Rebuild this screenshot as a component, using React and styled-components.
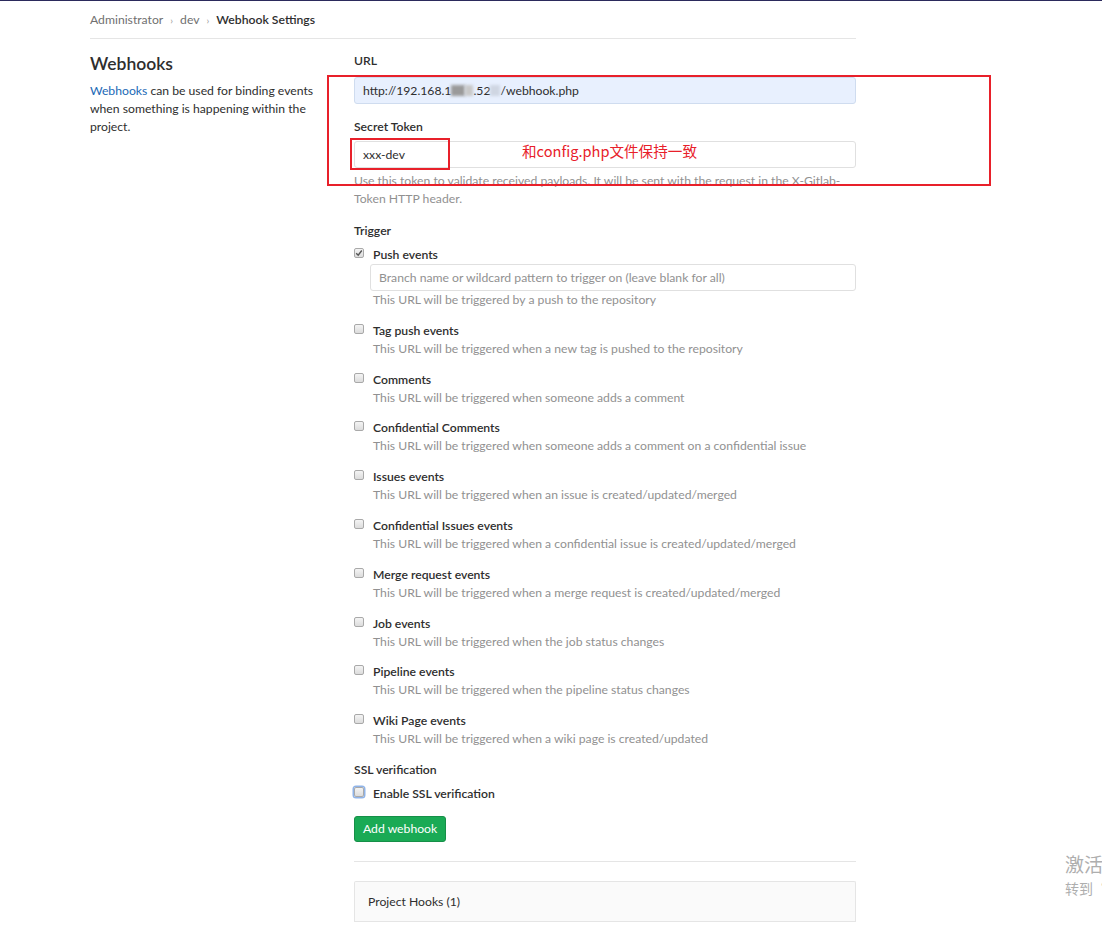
import styled, { createGlobalStyle } from 'styled-components';

const GlobalStyle = createGlobalStyle`
  html, body {
    margin: 0;
    padding: 0;
    background: #fff;
    overflow: hidden;
  }
  body {
    font-family: Lato, "Noto Sans", "Liberation Sans", sans-serif;
    font-size: 12.2px;
    color: #2e2e2e;
  }
`;

const Page = styled.div`
  position: relative;
  min-height: 925px;
  border-top: 1px solid #2b2a5c;
  box-sizing: border-box;
`;

const Container = styled.div`
  width: 766px;
  margin-left: 90px;
`;

const Breadcrumbs = styled.div`
  display: flex;
  align-items: center;
  height: 37px;
  border-bottom: 1px solid #e5e5e5;
  color: #707070;
  line-height: 18px;
`;

const Crumb = styled.span`
  color: ${(p) => (p.current ? '#2e2e2e' : '#707070')};
  font-weight: ${(p) => (p.current ? 600 : 400)};
`;

const Chevron = styled.span`
  color: #9a9a9a;
  font-size: 10px;
  margin: 0 7px;
`;

const Row = styled.div`
  display: flex;
  padding-top: 13px;
`;

const Sidebar = styled.div`
  width: 232px;
  margin-right: 32px;
`;

const Heading = styled.h4`
  margin: 0 0 6px;
  font-size: 17.5px;
  font-weight: 600;
  line-height: 24px;
`;

const Intro = styled.p`
  margin: 0;
  line-height: 18px;
  a {
    color: #1b69b6;
    text-decoration: none;
  }
`;

const Form = styled.div`
  width: 502px;
`;

const Group = styled.div`
  margin-bottom: ${(p) => p.mb || 14}px;
`;

const Label = styled.div`
  line-height: 18px;
  font-weight: 600;
  margin-bottom: ${(p) => p.mb || 6}px;
`;

const Input = styled.div`
  box-sizing: border-box;
  height: 27px;
  margin-left: ${(p) => p.shift || 0}px;
  padding: 0 8px;
  display: flex;
  align-items: center;
  border: 1px solid ${(p) => (p.autofill ? '#cfdcef' : '#e0e0e0')};
  background: ${(p) => (p.autofill ? '#e8f0fe' : '#fff')};
  border-radius: 3px;
  color: ${(p) => (p.placeholder ? '#919191' : '#2e2e2e')};
  white-space: nowrap;
`;

const Blur = styled.span`
  display: inline-block;
  width: ${(p) => p.w}px;
  height: 11px;
  background: ${(p) => p.c};
  filter: blur(1.5px);
  vertical-align: middle;
`;

const Help = styled.div`
  color: #919191;
  line-height: 18px;
  margin-top: ${(p) => p.mt || 0}px;
`;

const Option = styled.div`
  margin-bottom: 12.8px;
`;

const CheckRow = styled.label`
  display: flex;
  align-items: center;
  line-height: 18px;
  font-weight: 600;
`;

const Box = styled.span`
  box-sizing: border-box;
  width: 10px;
  height: 10px;
  margin-right: 9px;
  margin-top: -4px;
  border: 1px solid #a9a9a9;
  border-radius: 2px;
  background: linear-gradient(#f4f4f4, #dcdcdc);
  box-shadow: ${(p) => (p.focus ? '0 0 0 1.5px #8fb3e8' : 'none')};
  display: flex;
  align-items: center;
  justify-content: center;
`;

const OptionBody = styled.div`
  padding-left: 19px;
`;

const Button = styled.button`
  height: 26px;
  padding: 0 8px;
  font-family: inherit;
  font-size: 12.2px;
  color: #fff;
  background: #1aaa55;
  border: 1px solid #168f48;
  border-radius: 3px;
  margin-top: 13px;
`;

const Divider = styled.hr`
  border: 0;
  border-top: 1px solid #e5e5e5;
  margin: 19px 0 19px;
`;

const Panel = styled.div`
  border: 1px solid #e5e5e5;
  border-bottom: 0;
  border-radius: 2px 2px 0 0;
  background: #fafafa;
`;

const PanelHeader = styled.div`
  height: 39px;
  padding: 0 13px;
  display: flex;
  align-items: center;
  border-bottom: 1px solid #e5e5e5;
`;

const Annotation = styled.div`
  position: absolute;
  border: 2px solid #e8202a;
  box-sizing: border-box;
`;

const Note = styled.div`
  position: absolute;
  left: 522px;
  top: 140px;
  color: #e8202a;
  font-family: "Noto Sans CJK SC", "Noto Sans", sans-serif;
  font-size: 14.6px;
  line-height: 20px;
  text-shadow: 0 0 2px #fff, 0 0 2px #fff;
`;

const Watermark = styled.div`
  position: absolute;
  left: 1065px;
  top: 850px;
  color: #aeaeae;
  font-family: "Noto Sans CJK SC", sans-serif;
  white-space: nowrap;
  div:first-child {
    font-size: 19px;
    line-height: 26px;
  }
  div:last-child {
    font-size: 14px;
    line-height: 22px;
  }
`;

const events = [
  ['Tag push events', 'This URL will be triggered when a new tag is pushed to the repository'],
  ['Comments', 'This URL will be triggered when someone adds a comment'],
  ['Confidential Comments', 'This URL will be triggered when someone adds a comment on a confidential issue'],
  ['Issues events', 'This URL will be triggered when an issue is created/updated/merged'],
  ['Confidential Issues events', 'This URL will be triggered when a confidential issue is created/updated/merged'],
  ['Merge request events', 'This URL will be triggered when a merge request is created/updated/merged'],
  ['Job events', 'This URL will be triggered when the job status changes'],
  ['Pipeline events', 'This URL will be triggered when the pipeline status changes'],
  ['Wiki Page events', 'This URL will be triggered when a wiki page is created/updated'],
];

const Check = () => (
  <svg width="8" height="8" viewBox="0 0 8 8">
    <path d="M1.2 4.2 L3.2 6.2 L6.8 1.5" fill="none" stroke="#555" strokeWidth="1.4" />
  </svg>
);

export default function App() {
  return (
    <Page>
      <GlobalStyle />
      <Container>
        <Breadcrumbs>
          <Crumb>Administrator</Crumb>
          <Chevron>›</Chevron>
          <Crumb>dev</Crumb>
          <Chevron>›</Chevron>
          <Crumb current>Webhook Settings</Crumb>
        </Breadcrumbs>
        <Row>
          <Sidebar>
            <Heading>Webhooks</Heading>
            <Intro>
              <a href="#">Webhooks</a> can be used for binding events when something is happening within the project.
            </Intro>
          </Sidebar>
          <Form>
            <Group>
              <Label mb={7}>URL</Label>
              <Input autofill>
                http://192.168.1<Blur w={14} c="#9a9a9a" />
                <Blur w={8} c="#c8c8c8" />.52<Blur w={10} c="#cfd6e2" />/webhook.php
              </Input>
            </Group>
            <Group mb={14}>
              <Label mb={5}>Secret Token</Label>
              <Input>xxx-dev</Input>
              <Help mt={4}>
                Use this token to validate received payloads. It will be sent with the request in the X-Gitlab-Token HTTP header.
              </Help>
            </Group>
            <Label>Trigger</Label>
            <Option>
              <CheckRow>
                <Box>
                  <Check />
                </Box>
                Push events
              </CheckRow>
              <OptionBody>
                <Input placeholder shift={-3}>
                  Branch name or wildcard pattern to trigger on (leave blank for all)
                </Input>
                <Help>This URL will be triggered by a push to the repository</Help>
              </OptionBody>
            </Option>
            {events.map(([title, help]) => (
              <Option key={title}>
                <CheckRow>
                  <Box />
                  {title}
                </CheckRow>
                <OptionBody>
                  <Help>{help}</Help>
                </OptionBody>
              </Option>
            ))}
            <Label>SSL verification</Label>
            <CheckRow>
              <Box focus />
              Enable SSL verification
            </CheckRow>
            <Button>Add webhook</Button>
            <Divider />
            <Panel>
              <PanelHeader>Project Hooks (1)</PanelHeader>
            </Panel>
          </Form>
        </Row>
      </Container>
      <Annotation style={{ left: 327, top: 74, width: 664, height: 111 }} />
      <Annotation style={{ left: 350, top: 137, width: 100, height: 32 }} />
      <Note>和config.php文件保持一致</Note>
      <Watermark>
        <div>激活</div>
        <div>转到“</div>
      </Watermark>
    </Page>
  );
}
